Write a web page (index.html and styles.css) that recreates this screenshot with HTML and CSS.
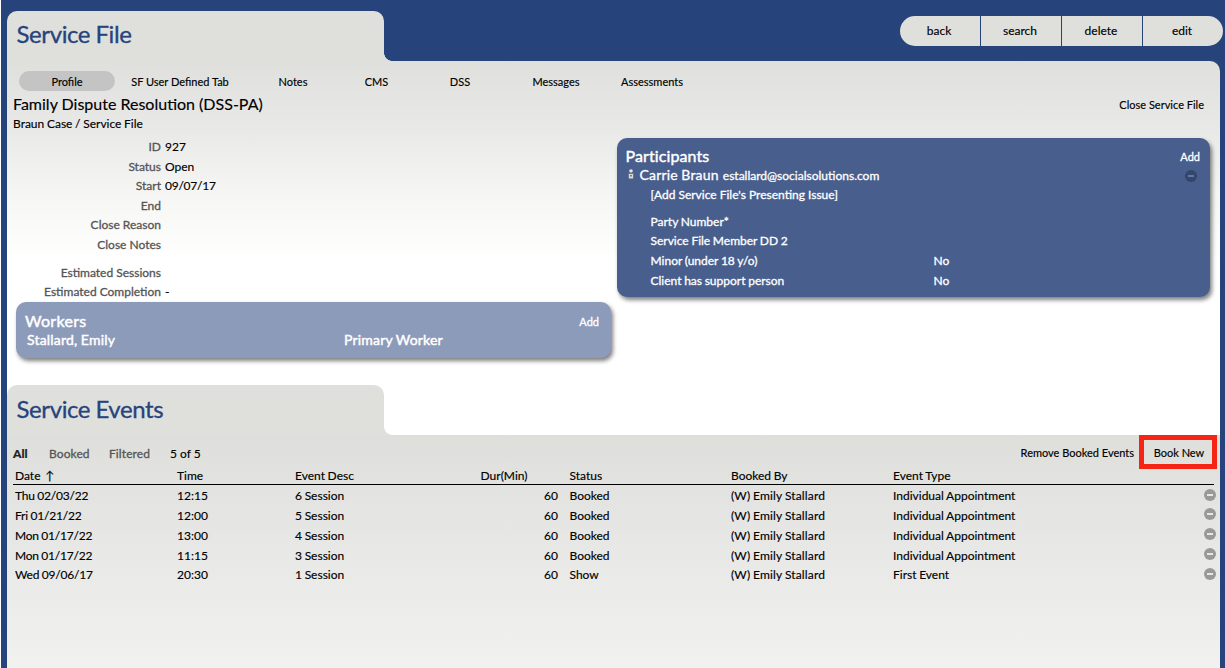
FILE: index.html
```
<!DOCTYPE html>
<html lang="en">
<head>
  <meta charset="UTF-8" />
  <title>Service File</title>
  <link rel="stylesheet" href="styles.css">
</head>
<body>
  <header class="header">
    <h1 class="tab-title">Service File</h1>
    <nav class="actions">
      <a>back</a>
      <a>search</a>
      <a>delete</a>
      <a>edit</a>
    </nav>
  </header>

  <main class="file">
    <nav class="tabs">
      <a class="active">Profile</a>
      <a class="wide">SF User Defined Tab</a>
      <a>Notes</a>
      <a class="narrow">CMS</a>
      <a>DSS</a>
      <a>Messages</a>
      <a>Assessments</a>
    </nav>

    <div class="heading">
      <div>
        <h2>Family Dispute Resolution (DSS-PA)</h2>
        <div class="crumb">Braun Case / Service File</div>
      </div>
      <a class="close-link">Close Service File</a>
    </div>

    <div class="columns">
      <div class="left">
        <dl class="fields">
          <dt>ID</dt><dd>927</dd>
          <dt>Status</dt><dd>Open</dd>
          <dt>Start</dt><dd class="date">09/07/17</dd>
          <dt>End</dt><dd></dd>
          <dt>Close Reason</dt><dd></dd>
          <dt>Close Notes</dt><dd></dd>
        </dl>
        <dl class="fields estimates">
          <dt>Estimated Sessions</dt><dd></dd>
          <dt>Estimated Completion</dt><dd>-</dd>
        </dl>
        <section class="box workers">
          <div class="box-head"><h3>Workers</h3><a>Add</a></div>
          <div class="worker"><span>Stallard, Emily</span><span>Primary Worker</span></div>
        </section>
      </div>

      <section class="box participants">
        <div class="box-head"><h3>Participants</h3><a>Add</a></div>
        <div class="person">
          <svg class="person-icon" width="6" height="10" viewBox="0 0 6 10">
            <circle cx="3" cy="2" r="1.8" fill="#e4e4e4"/>
            <rect x="0.8" y="4" width="4.4" height="5.5" fill="#d8d8d4"/>
            <path d="M1 4.3h4M2 6.8h2" stroke="#55585c"/>
          </svg>
          <span class="name">Carrie Braun</span>
          <span class="email">estallard@socialsolutions.com</span>
          <svg class="remove" width="12" height="12" viewBox="0 0 12 12">
            <circle cx="6" cy="6" r="6" fill="#34466b"/>
            <path d="M3 6h6" stroke="#6378a5" stroke-width="2"/>
          </svg>
        </div>
        <div class="details">
          <div class="issue">[Add Service File's Presenting Issue]</div>
          <div class="detail"><span>Party Number*</span><span></span></div>
          <div class="detail"><span>Service File Member DD 2</span><span></span></div>
          <div class="detail"><span>Minor (under 18 y/o)</span><span>No</span></div>
          <div class="detail"><span>Client has support person</span><span>No</span></div>
        </div>
      </section>
    </div>

    <h1 class="tab-title">Service Events</h1>
  </main>

  <section class="events">
    <div class="filters">
      <a class="all">All</a>
      <a class="booked">Booked</a>
      <a class="filtered">Filtered</a>
      <span class="count">5 of 5</span>
      <a class="remove-link">Remove Booked Events</a>
      <a class="book-new">Book New</a>
    </div>
    <table>
      <colgroup>
        <col class="c-date"><col class="c-time"><col class="c-desc"><col class="c-dur">
        <col class="c-status"><col class="c-by"><col class="c-type"><col>
      </colgroup>
      <thead>
        <tr><th>Date <span class="arrow">↑</span></th><th>Time</th><th>Event Desc</th><th class="dur">Dur(Min)</th><th>Status</th><th>Booked By</th><th>Event Type</th><th></th></tr>
      </thead>
      <tbody id="rows"></tbody>
    </table>
  </section>

  <script>
    const events = [
      ["Thu 02/03/22", "12:15", "6 Session", "60", "Booked", "(W) Emily Stallard", "Individual Appointment"],
      ["Fri 01/21/22", "12:00", "5 Session", "60", "Booked", "(W) Emily Stallard", "Individual Appointment"],
      ["Mon 01/17/22", "13:00", "4 Session", "60", "Booked", "(W) Emily Stallard", "Individual Appointment"],
      ["Mon 01/17/22", "11:15", "3 Session", "60", "Booked", "(W) Emily Stallard", "Individual Appointment"],
      ["Wed 09/06/17", "20:30", "1 Session", "60", "Show", "(W) Emily Stallard", "First Event"]
    ];
    const removeIcon = '<svg class="remove" width="12" height="12" viewBox="0 0 12 12">' +
      '<circle cx="6" cy="6" r="6" fill="#999"/>' +
      '<path d="M3 6h6" stroke="#e6e6e6" stroke-width="2"/></svg>';

    document.getElementById("rows").innerHTML = events.map(row =>
      "<tr>" + row.map((cell, i) => `<td${i === 3 ? ' class="num"' : ""}>${cell}</td>`).join("") +
      `<td class="icon-cell">${removeIcon}</td></tr>`
    ).join("");
  </script>
</body>
</html>
```
FILE: styles.css
```
* {
  box-sizing: border-box;
}
html {
  background: #fff;
}
body {
  display: flex;
  flex-direction: column;
  height: 668px;
  margin: 0 0 0 1px;
  padding: 0 5px 0 6px;
  overflow: hidden;
  background: #26437c;
  font-family: Lato, sans-serif;
  font-size: 12px;
  word-spacing: -0.4px;
  color: #000;
  -webkit-text-stroke: 0.15px;
}
h1, h2, h3, dl, dd {
  margin: 0;
  font-weight: 400;
}
.header {
  display: flex;
  justify-content: space-between;
  height: 61px;
  padding-top: 11px;
}
.tab-title {
  position: relative;
  width: 377px;
  height: 50px;
  padding-left: 9.5px;
  border-radius: 10px 10px 0 0;
  background: #dfe0dc;
  color: #26437c;
  font-size: 24px;
  letter-spacing: -0.4px;
  line-height: 48px;
  -webkit-text-stroke: 0.3px;
}
.header .tab-title {
  line-height: 46px;
}
/* inverted corner where the tab meets the panel */
.tab-title::after {
  content: "";
  position: absolute;
  left: 100%;
  bottom: 0;
  width: 8px;
  height: 8px;
  background: radial-gradient(circle at 100% 0, transparent 7.5px, #dfe0dc 8px);
}
.actions {
  display: flex;
  gap: 1px;
  height: 30px;
  margin: 5px -3px 0 0;
  border-radius: 15px;
  overflow: hidden;
}
.actions a {
  width: 80px;
  background: #dfe0dc;
  line-height: 30px;
  text-align: center;
  padding-right: 2px;
}
.file {
  flex: none;
  height: 374px;
  padding-top: 10px;
  border-radius: 0 10px 0 0;
  background: linear-gradient(#dfe0dc 0, #e9e9e8 70px, #f5f5f3 130px, #fff 200px);
}
.tabs {
  display: flex;
  height: 20px;
  margin-left: 12px;
  font-size: 11px;
  line-height: 22px;
  text-align: center;
  word-spacing: 0;
}
.tabs a {
  width: 96px;
}
.tabs .wide {
  width: 130px;
}
.tabs .narrow {
  width: 71px;
}
.tabs .active {
  border-radius: 10px;
  background: #c4c4c4;
}
.heading {
  display: flex;
  justify-content: space-between;
  height: 46px;
  padding: 3px 16px 0 6px;
}
.heading h2 {
  height: 21px;
  font-size: 16px;
  line-height: 19px;
  word-spacing: 0;
}
.crumb {
  line-height: 18px;
}
.close-link {
  font-size: 11px;
  line-height: 22px;
  word-spacing: 0;
}
.columns {
  display: flex;
  height: 248px;
  padding: 0 10px 0 9px;
  gap: 6px;
}
.left {
  width: 595px;
}
.fields {
  display: grid;
  grid-template-columns: 145px 1fr;
  column-gap: 4px;
  grid-auto-rows: 19.6px;
  line-height: 20px;
}
.fields dt {
  color: #555;
  text-align: right;
  word-spacing: 0;
  -webkit-text-stroke: 0.3px;
}
.fields .date {
  letter-spacing: -0.25px;
}
.estimates {
  margin-top: 8px;
}
.box {
  border-radius: 10px;
  box-shadow: 2px 3px 4px rgba(0, 0, 0, 0.5);
  color: #fff;
  -webkit-text-stroke: 0.3px;
}
.box-head {
  display: flex;
  justify-content: space-between;
  height: 19px;
  font-size: 11px;
  line-height: 19px;
}
.box-head h3 {
  font-size: 16px;
  line-height: 17px;
  letter-spacing: 0.1px;
  -webkit-text-stroke: 0.45px;
}
.workers {
  height: 56px;
  padding: 10px 12px 0 9px;
  background: #8d9bbb;
}
.workers h3 {
  letter-spacing: 0.3px;
}
.worker {
  display: flex;
  padding-left: 2px;
  font-size: 14px;
  letter-spacing: 0.2px;
  -webkit-text-stroke: 0.45px;
}
.worker span {
  flex: none;
  width: 317px;
}
.participants {
  flex: 1;
  height: 159px;
  margin-top: 1px;
  padding: 9px 10px 0 8.5px;
  background: #485e8d;
}
.person {
  display: flex;
  align-items: center;
  height: 19px;
}
.person-icon {
  margin: -4px 5.5px 0 2.5px;
}
.name {
  margin: -2px 4px 0 0;
  font-size: 14px;
  letter-spacing: 0.2px;
  line-height: 17px;
}
.person .remove {
  margin: 0 3px 0 auto;
}
.details {
  padding-left: 25px;
  line-height: 19.7px;
}
.issue {
  margin-bottom: 7px;
  word-spacing: 0;
}
.detail {
  display: flex;
}
.detail span:first-child {
  width: 283px;
}
.events {
  flex: 1;
  padding: 8px 6px 0;
  background: linear-gradient(#dedfdb, #e9e9e8 130px, #f1f1f0 233px);
}
.filters {
  display: flex;
  height: 22px;
  line-height: 22px;
  color: #555;
}
.all {
  width: 36px;
  color: #222;
  font-weight: 900;
}
.booked {
  width: 60px;
}
.filtered {
  width: 61px;
}
.booked, .filtered {
  letter-spacing: 0.1px;
  -webkit-text-stroke: 0.3px;
}
.count, .remove-link, .book-new {
  color: #000;
}
.count {
  word-spacing: 0;
}
.remove-link {
  margin-left: auto;
  font-size: 11px;
  line-height: 20px;
  word-spacing: 0;
}
.book-new {
  width: 78px;
  height: 34px;
  margin: -8px -3px 0 5px;
  padding-left: 2px;
  border: 5px solid #f52516;
  font-size: 11px;
  line-height: 26px;
  text-align: center;
  word-spacing: 0;
}
table {
  width: 1201px;
  border-collapse: collapse;
  table-layout: fixed;
}
th, td {
  height: 19.8px;
  padding: 0 0 0 2px;
  font-weight: 400;
  text-align: left;
  line-height: 18px;
}
thead th {
  padding-top: 3px;
  border-bottom: 1px solid #000;
  line-height: 16px;
}
td {
  padding-top: 2px;
  line-height: 17px;
}
.arrow {
  margin-left: 2px;
}
td:first-child {
  letter-spacing: -0.2px;
}
td:nth-child(6) {
  letter-spacing: 0.15px;
}
td.num {
  padding-right: 9.5px;
  text-align: right;
}
th.dur {
  padding-right: 40px;
  text-align: right;
}
td.icon-cell {
  padding-top: 0;
  text-align: right;
}
td .remove {
  display: block;
  margin: 0 -2px 0 auto;
}
.c-date { width: 162px; }
.c-time { width: 118px; }
.c-desc { width: 154px; }
.c-dur { width: 120.5px; }
.c-status { width: 161.5px; }
.c-by { width: 162px; }
.c-type { width: 162px; }
```
